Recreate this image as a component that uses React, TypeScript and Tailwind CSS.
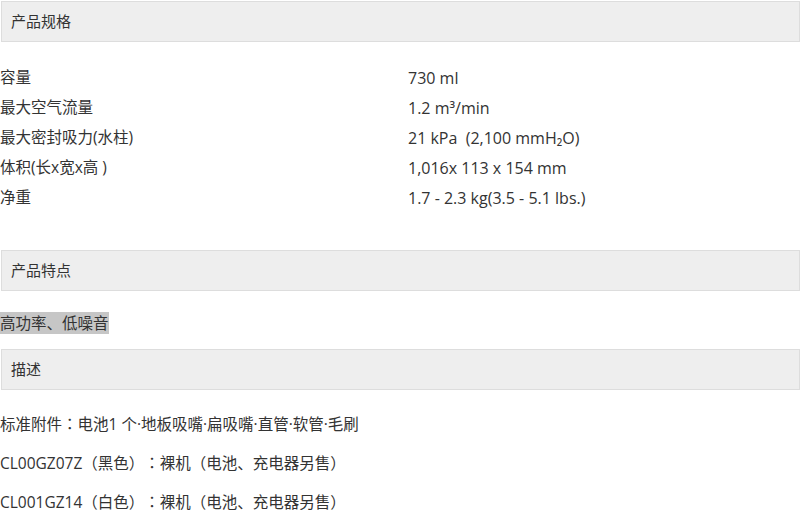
const specs: [string, React.ReactNode][] = [
  ["容量", "730 ml"],
  ["最大空气流量", <>1.2 m³/min</>],
  ["最大密封吸力(水柱)", <>21 kPa &nbsp;(2,100 mmH₂O)</>],
  ["体积(长x宽x高 )", "1,016x 113 x 154 mm"],
  ["净重", "1.7 - 2.3 kg(3.5 - 5.1 lbs.)"],
];

// full-width colon sits centred in the source font, TC glyph does the same
const Colon = () => <span style={{ fontFamily: '"Noto Sans CJK TC", sans-serif' }}>：</span>;

function SectionHeader({ title }: { title: string }) {
  return (
    <div className="ml-px flex h-[41px] items-center border border-[#dddddd] bg-[#eeeeee] pl-[9px] text-[15px] text-[#333]">
      {title}
    </div>
  );
}

export default function App() {
  return (
    <div
      className="h-[516px] w-[800px] overflow-hidden bg-white pt-px text-[15.5px] text-[#333] [text-spacing-trim:space-all]"
      style={{ fontFamily: '"Open Sans", "Noto Sans CJK SC", sans-serif' }}
    >
      <SectionHeader title="产品规格" />
      <div className="mt-[21px] flex flex-col">
        {specs.map(([label, value]) => (
          <div key={label} className="flex h-[30px] items-center">
            <div className="w-[408px] shrink-0">{label}</div>
            <div className="text-[16px]">{value}</div>
          </div>
        ))}
      </div>
      <div className="mt-[37px]">
        <SectionHeader title="产品特点" />
      </div>
      <div className="mt-[21px] flex h-[22px] items-center">
        <span className="bg-[#c6c6c6] leading-[22px]">高功率、低噪音</span>
      </div>
      <div className="mt-[15px]">
        <SectionHeader title="描述" />
      </div>
      <div className="mt-[22px] flex flex-col gap-[16px]">
        <p className="leading-[22px]">
          标准附件<Colon />电池1 个·地板吸嘴·扁吸嘴·直管·软管·毛刷
        </p>
        <p className="leading-[22px]">
          CL00GZ07Z（黑色）<Colon />裸机（电池、充电器另售）
        </p>
        <p className="leading-[22px]">
          CL001GZ14（白色）<Colon />裸机（电池、充电器另售）
        </p>
      </div>
    </div>
  );
}
